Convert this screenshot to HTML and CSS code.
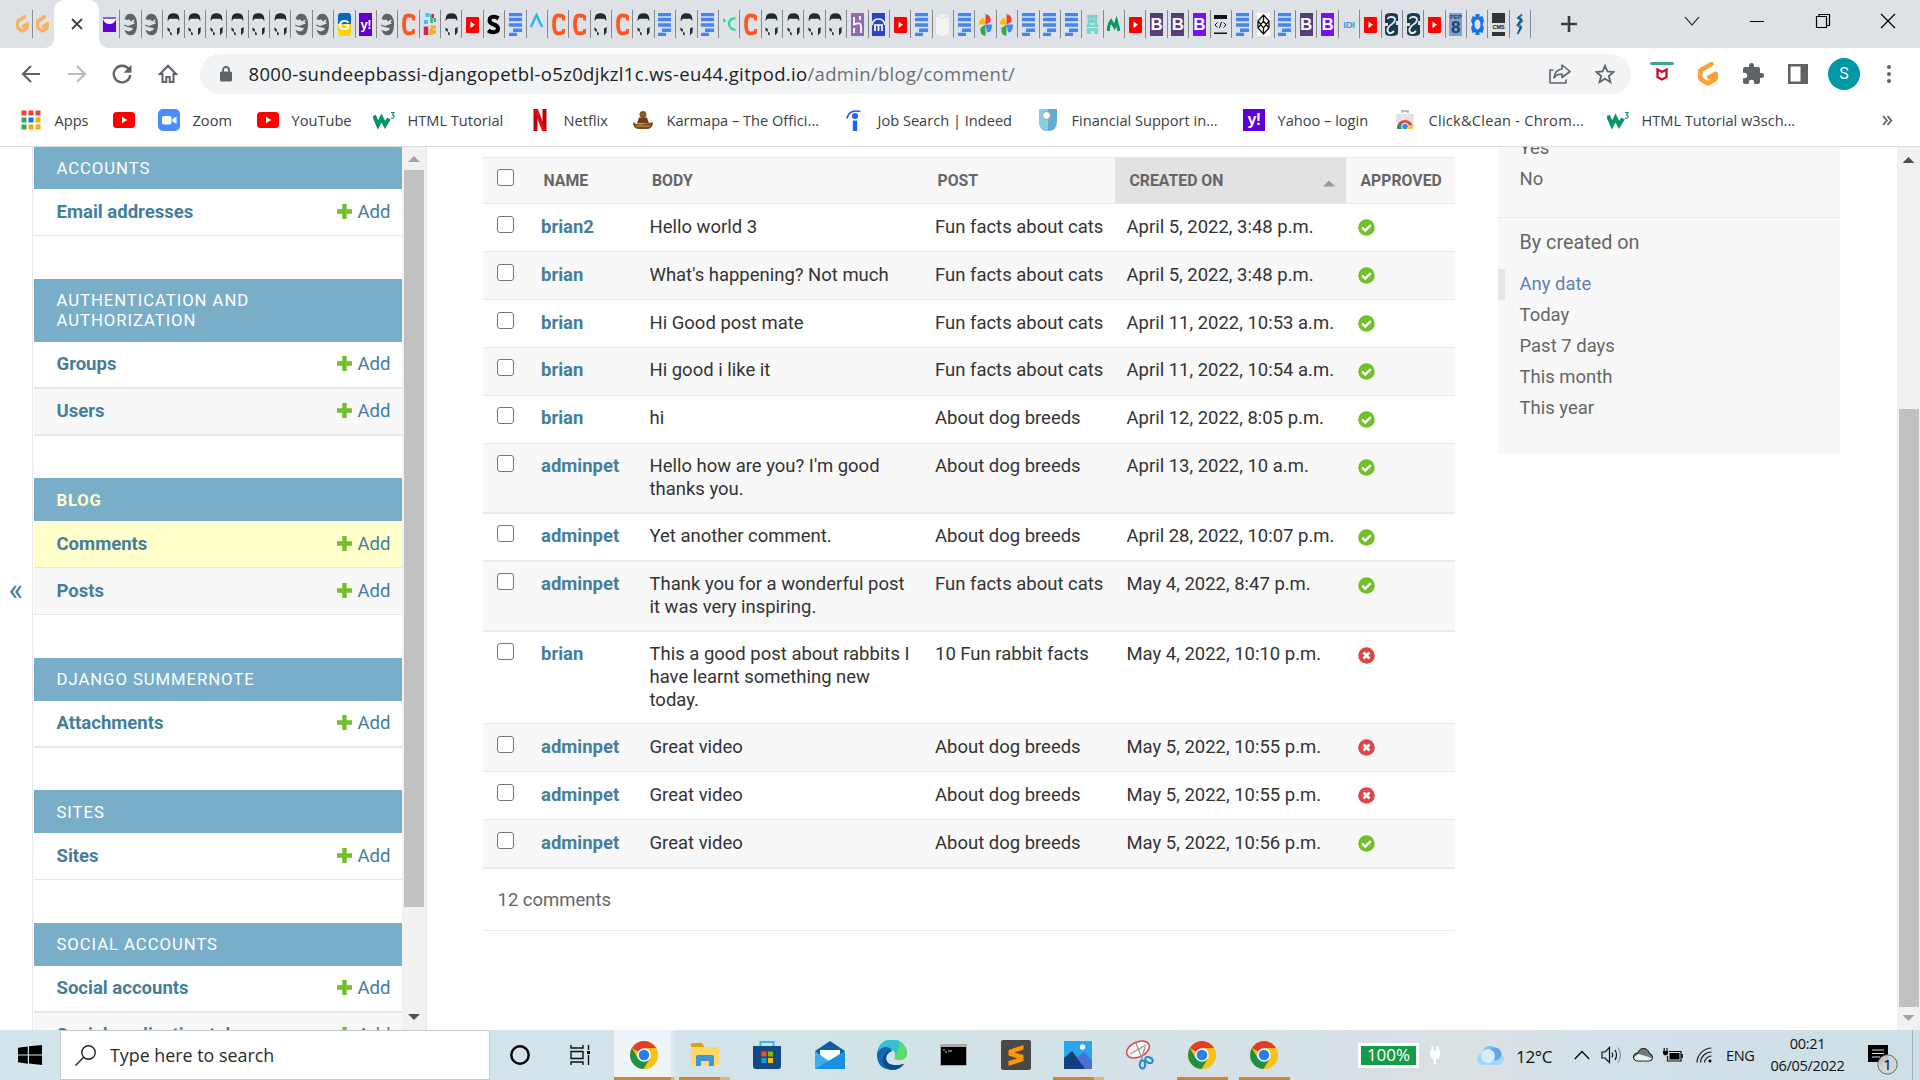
FILE: index.html
```html
<!DOCTYPE html>
<html lang="en">
<head>
<meta charset="utf-8">
<title>Select comment to change | Django site admin</title>
<link rel="stylesheet" href="styles.css">
</head>
<body>
<svg class="sprite" aria-hidden="true">
  <symbol id="gitpod" viewBox="0 0 24 24"><path d="M15 3.6 6.2 8.4a1.6 1.6 0 0 0-.8 1.4v5.6a1.6 1.6 0 0 0 .8 1.4l5 2.9a1.6 1.6 0 0 0 1.600 0l5-2.900a1.600 1.600 0 0 0 .8-1.400v-3.600l-5.600 3" fill="none" stroke="#ffa133" stroke-width="4" stroke-linecap="round" stroke-linejoin="round"/></symbol>
  <symbol id="f-mail" viewBox="0 0 13 23"><path d="M0 4h13v3H0z" fill="#8a5ce6"/><path d="M0 7h13v12H0z" fill="#6001d2"/><path d="M0 6h13q-1.500 5-6.500 5T0 6z" fill="#fff"/></symbol>
  <symbol id="f-globe" viewBox="0 0 13 23"><path d="M.5 6Q2 .7 6.500.7 13 .7 13 11.500T6.500 22.300Q2 22.300.5 17L5 18.500 8 17l1-2-3.500-.5L2 13.500Q0 13.500 0 11.500L4 13l4-1.500 3-1-1.500-1.500L11 6.500 9 7 7 8.500 5.500 6.500 3 7z" fill="#5f6368"/></symbol>
  <symbol id="f-gh" viewBox="0 0 13 23"><path d="M.8 5Q1 .3 6.500.3T12.200 5l.2 3-2-2.200H2.600L.6 8z" fill="#24292e"/><path d="M.3 14.500 2.800 16v3L.6 17.500zM12.700 14 10 15.500V22.500l2.500-3zM3 19l1.700.8v2.700L3 21.500z" fill="#24292e"/></symbol>
  <symbol id="f-c" viewBox="0 0 13 23"><path d="M12 7.500V4C10 2.500 9 2.500 6.500 2.500 3 2.500 2 5 2 11.500s1 9 4.500 9c2.500 0 3.500 0 5.500-1.500V16" fill="none" stroke="#ff5722" stroke-width="3.800"/></symbol>
  <symbol id="f-slack" viewBox="0 0 13 23"><path d="M4.500 0v4M1 9h4" stroke="#36c5f0" stroke-width="4"/><path d="M8.500 1v9M12 5v4" stroke="#2eb67d" stroke-width="2.500"/><path d="M3 13.500V22" stroke="#e01e5a" stroke-width="4.500"/><path d="M10 1v4" stroke="#e01e5a" stroke-width="2"/><path d="M7.500 14.500H13M8.500 16v6M12 17v4" stroke="#ecb22e" stroke-width="3.500"/></symbol>
  <symbol id="f-yt" viewBox="0 0 13 23"><rect y="4" width="13" height="16" rx="1" fill="#f00"/><path d="m4.500 8.500 4.500 3.300-4.500 3.200z" fill="#fff"/></symbol>
  <symbol id="f-s" viewBox="0 0 13 23"><path d="M11.500 5.500C8 3 2.500 3 2.500 7.500c0 5 8.500 3 8.500 8 0 4.500-6.500 4.500-10 2" fill="none" stroke="#000" stroke-width="4"/></symbol>
  <symbol id="f-doc" viewBox="0 0 13 23"><path d="M0 1.500h13M0 6.500h13M0 12h13M4 17.300h9M0 21.500h8" stroke="#4285f4" stroke-width="3.400"/></symbol>
  <symbol id="f-a" viewBox="0 0 13 23"><path d="M.8 14 6.500 2l5.700 12" fill="none" stroke="#1fb4f5" stroke-width="2.400"/></symbol>
  <symbol id="f-tc" viewBox="0 0 13 23"><path d="M.5 6 2 9M12.500 5.500C4 4 4 16.500 12.500 17" fill="none" stroke="#30d5a0" stroke-width="2.400"/></symbol>
  <symbol id="f-heroku" viewBox="0 0 13 23"><path d="M0 0h13v23H0z" fill="#8f6bb3"/><path d="M3 4v7.500C8 9.500 10 10 10 13v7M9 3v4M3 15v5" fill="none" stroke="#fff" stroke-width="1.800"/></symbol>
  <symbol id="f-m" viewBox="0 0 13 23"><path d="M0 0h13v23H0z" fill="#2b44c7"/><path d="M0 12Q1 6 6.500 6T13 12M3 18v-6h3.500v6M6.500 12H10v6" fill="none" stroke="#fff" stroke-width="1.700"/></symbol>
  <symbol id="f-w" viewBox="0 0 13 23"><path d="M0 3 6.500 1 13 3v18l-6.500 2L0 21z" fill="#f4f4f1"/><path d="m0 3 6.500 2L13 3" fill="none" stroke="#dcdcd6"/></symbol>
  <symbol id="f-pin" viewBox="0 0 13 23"><path d="M6.500 11.500V1q6 1 5 8z" fill="#ea4335"/><path d="M6.500 11.500H13q0 8-5 8z" fill="#4285f4"/><path d="M6.500 11.500V23q-6-1-5-8z" fill="#34a853"/><path d="M6.500 11.500H0Q0 5 5 5z" fill="#fbbc04"/></symbol>
  <symbol id="f-teal" viewBox="0 0 13 23"><path d="M1 2h11l-1 7 2 5H0l2-5zM1 15h11v6H8v-3H5v3H1z" fill="#79d4cd"/><path d="M4 6h1m3 0h1M4 11h5" stroke="#dee1e6" stroke-width="1.500"/></symbol>
  <symbol id="f-gw" viewBox="0 0 13 23"><path d="M1.500 18Q1 12 4 8l3.500 6L9.500 8 12 18" fill="none" stroke="#059862" stroke-width="3"/></symbol>
  <symbol id="f-code" viewBox="0 0 13 23"><path d="M0 2h13v4H0zM0 19.500h13v1.500H0z" fill="#111"/><path d="M3.500 9.500 1 12l2.500 2.500M7.500 9l-2 6M9.500 9.500 12 12l-2.500 2.500" stroke="#111" fill="none"/></symbol>
  <symbol id="f-cp" viewBox="0 0 13 23"><path d="M0 0h13v23H0z" fill="#fff"/><path d="M6.500 2 12 8v7l-5.500 6L1 15V8zM6.500 2v6M6.500 15v6M1 8l5.500 7L12 8M1 15l5.500-7 5.500 7" fill="none" stroke="#111" stroke-width="1.300"/></symbol>
  <symbol id="f-py" viewBox="0 0 13 23"><path d="M0 3q0-3 6.500-3T13 3v17q0 3-6.500 3T0 20z" fill="#1a3a50"/><path d="M0 10h3v3H0zM11 8h2v4h-2z" fill="#dee1e6"/><path d="M2.500 6q1-2.500 4.500-2T10 7t-3 4-4 4 .5 4.500T9 18" fill="none" stroke="#e9edf0" stroke-width="1.800"/></symbol>
  <symbol id="f-gear" viewBox="0 0 13 23"><path d="M4.500 1h4v3l3-1 1.500 5-1.500 3.500L13 15l-1.500 5-3-1v3h-4v-3l-3 1L0 15l1.500-3.500L0 8l1.500-5 3 1z" fill="#1a73e8"/><ellipse cx="6.500" cy="11.500" rx="3" ry="5" fill="#dee1e6"/></symbol>
  <symbol id="f-dna" viewBox="0 0 13 23"><path d="M9 1.500 5 5l4 3-4.500 4L8 15l-3.500 6" fill="none" stroke="#1b6fa8" stroke-width="2"/><path d="M5 4l4 2-4 4 3.500 3-3 5" fill="none" stroke="#123f66"/></symbol>

  <symbol id="yt" viewBox="0 0 22 22"><rect y="3" width="22" height="16" rx="3.500" fill="#f00"/><path d="m9 7.800 5.500 3.200L9 14.200z" fill="#fff"/></symbol>
  <symbol id="w3" viewBox="0 0 22 22"><path d="M1 6.500 5 16l3.500-7 3.500 7 4-6.500" fill="none" stroke="#059862" stroke-width="4"/><path d="M18 3.500h3L19.500 6q2 0 1.500 1.800T18 9" fill="none" stroke="#059862" stroke-width="1.200"/></symbol>
  <symbol id="plus" viewBox="0 0 15 15"><path d="M5.300 0h4.400v5.300H15v4.400H9.700V15H5.300V9.700H0V5.300h5.300z" fill="#70bf2b"/></symbol>
  <symbol id="yes" viewBox="0 0 17 17"><circle cx="8.500" cy="8.500" r="8.300" fill="#70bf2b"/><path d="m4.200 8.600 3 3 5.600-5.500" fill="none" stroke="#fff" stroke-width="2.400"/></symbol>
  <symbol id="no" viewBox="0 0 17 17"><circle cx="8.500" cy="8.500" r="8.300" fill="#dd4646"/><path d="m5.500 5.500 6 6m0-6-6 6" stroke="#fff" stroke-width="2.600"/></symbol>
  <symbol id="chrome" viewBox="0 0 28 28"><circle cx="14" cy="14" r="14" fill="#fbc116"/><path d="M14 14 1.900 7A14 14 0 0 1 26.100 7H14z" fill="#e33b2e"/><path d="M1.900 7a14 14 0 0 0 11.700 21l6.500-10.500L8 17.500z" fill="#1e9048"/><path d="M26.100 7A14 14 0 0 1 13.600 28l6.500-10.500L20 7z" fill="#fbc116"/><circle cx="14" cy="14" r="6.800" fill="#fff"/><circle cx="14" cy="14" r="5.300" fill="#2b7de9"/></symbol>
</svg>

<header class="browser">
  <div class="tabstrip">
    <div class="pre"><svg class="gp"><use href="#gitpod"/></svg><i class="sep"></i><svg class="gp"><use href="#gitpod"/></svg></div>
    <div class="active-tab"><svg width="12" height="12" viewBox="0 0 12 12"><path d="m1 1 10 10M11 1 1 11" stroke="#3c4043" stroke-width="1.800"/></svg></div>
    <div class="tabs">
      <i><svg><use href="#f-mail"/></svg></i><i><svg><use href="#f-globe"/></svg></i><i><svg><use href="#f-globe"/></svg></i><i><svg><use href="#f-gh"/></svg></i><i><svg><use href="#f-gh"/></svg></i><i><svg><use href="#f-gh"/></svg></i><i><svg><use href="#f-gh"/></svg></i><i><svg><use href="#f-gh"/></svg></i><i><svg><use href="#f-gh"/></svg></i><i><svg><use href="#f-globe"/></svg></i><i><svg><use href="#f-globe"/></svg></i><i><b class="fv ua">G</b></i><i><b class="fv ya">y!</b></i><i><svg><use href="#f-globe"/></svg></i><i><svg><use href="#f-c"/></svg></i><i><svg><use href="#f-slack"/></svg></i><i><svg><use href="#f-gh"/></svg></i><i><svg><use href="#f-yt"/></svg></i><i><svg><use href="#f-s"/></svg></i><i><svg><use href="#f-doc"/></svg></i><i><svg><use href="#f-a"/></svg></i><i><svg><use href="#f-c"/></svg></i><i><svg><use href="#f-c"/></svg></i><i><svg><use href="#f-gh"/></svg></i><i><svg><use href="#f-c"/></svg></i>
      <i><svg><use href="#f-gh"/></svg></i><i><svg><use href="#f-doc"/></svg></i><i><svg><use href="#f-gh"/></svg></i><i><svg><use href="#f-doc"/></svg></i><i><svg><use href="#f-tc"/></svg></i><i><svg><use href="#f-c"/></svg></i><i><svg><use href="#f-gh"/></svg></i><i><svg><use href="#f-gh"/></svg></i><i><svg><use href="#f-gh"/></svg></i><i><svg><use href="#f-gh"/></svg></i><i><svg><use href="#f-heroku"/></svg></i><i><svg><use href="#f-m"/></svg></i><i><svg><use href="#f-yt"/></svg></i><i><svg><use href="#f-doc"/></svg></i><i><svg><use href="#f-w"/></svg></i><i><svg><use href="#f-doc"/></svg></i><i><svg><use href="#f-pin"/></svg></i><i><svg><use href="#f-pin"/></svg></i><i><svg><use href="#f-doc"/></svg></i><i><svg><use href="#f-doc"/></svg></i><i><svg><use href="#f-doc"/></svg></i><i><svg><use href="#f-teal"/></svg></i><i><svg><use href="#f-gw"/></svg></i><i><svg><use href="#f-yt"/></svg></i><i><b class="fv bs">B</b></i><i><b class="fv bs">B</b></i><i><b class="fv bs vio">B</b></i><i><svg><use href="#f-code"/></svg></i><i><svg><use href="#f-doc"/></svg></i><i><svg><use href="#f-cp"/></svg></i>
      <i><svg><use href="#f-doc"/></svg></i><i><b class="fv bs">B</b></i><i><b class="fv bs vio">B</b></i><i><b class="fv idi">IDI</b></i><i><svg><use href="#f-yt"/></svg></i><i><svg><use href="#f-py"/></svg></i><i><svg><use href="#f-py"/></svg></i><i><svg><use href="#f-yt"/></svg></i><i><b class="fv pep"><small>PEP</small>8</b></i><i><svg><use href="#f-gear"/></svg></i><i><b class="fv cms">CMS</b></i><i><svg><use href="#f-dna"/></svg></i>
    </div>
    <svg class="newtab" width="18" height="18" viewBox="0 0 18 18"><path d="M9 1v16M1 9h16" stroke="#3c4043" stroke-width="2.600"/></svg>
    <div class="winctl">
      <svg viewBox="0 0 16 16"><path d="m1 4 7 8 7-8" fill="none" stroke="#111" stroke-width="1.100"/></svg>
      <svg viewBox="0 0 16 16"><path d="M1 8.500h14" stroke="#000"/></svg>
      <svg viewBox="0 0 16 16"><path d="M1.500 3.500h10v11h-10zM4 3.500v-2h10.500v11h-3" fill="none" stroke="#000" stroke-width="1.200"/></svg>
      <svg viewBox="0 0 16 16"><path d="m1 1 14 14M15 1 1 15" stroke="#000" stroke-width="1.200"/></svg>
    </div>
  </div>

  <div class="toolbar">
    <div class="nav">
      <svg viewBox="0 0 20 20"><path d="M19 10H2M10 2l-8 8 8 8" fill="none" stroke="#5f6368" stroke-width="2.200"/></svg>
      <svg viewBox="0 0 20 20"><path d="M1 10h17M10 2l8 8-8 8" fill="none" stroke="#babcbe" stroke-width="2.200"/></svg>
      <svg viewBox="0 0 20 20"><path d="M17 5.500A8.300 8.300 0 1 0 18.300 11" fill="none" stroke="#5f6368" stroke-width="2.300"/><path d="M19.500.8v8h-8z" fill="#5f6368"/></svg>
      <svg viewBox="0 0 20 20"><path d="M10 1.800 2 10h2.500v8h3.800v-5h3.400v5h3.800v-8H18z" fill="none" stroke="#5f6368" stroke-width="2"/></svg>
    </div>
    <div class="omnibox">
      <svg width="12" height="16" viewBox="0 0 12 16"><rect y="5.500" width="12" height="10" rx="1.500" fill="#5f6368"/><path d="M3 6V4a3 3 0 0 1 6 0v2" fill="none" stroke="#5f6368" stroke-width="1.800"/></svg>
      <span class="url">8000-sundeepbassi-djangopetbl-o5z0djkzl1c.ws-eu44.gitpod.io<span class="path">/admin/blog/comment/</span></span>
      <svg class="share" width="22" height="20" viewBox="0 0 22 20"><path d="M4.500 6H1v13h16v-3.500M13 1l8 6.500-8 6V10c-4 0-6.500 1.500-8 4 .5-5 3-8.500 8-9z" fill="none" stroke="#5f6368" stroke-width="1.600" stroke-linejoin="round"/></svg>
      <svg width="20" height="20" viewBox="0 0 20 20"><path d="m10 1.800 2.400 5.700 6.200.5-4.700 4 1.500 6.100-5.400-3.300-5.400 3.300 1.500-6.100-4.700-4 6.200-.5z" fill="none" stroke="#5f6368" stroke-width="1.800"/></svg>
    </div>
    <div class="ext">
      <svg width="24" height="24" viewBox="0 0 24 24"><path d="M1.500 1.500h21" stroke="#3fa58c" stroke-width="3" stroke-linecap="round"/><path d="M7.500 7.500V15l4.500 2.500 4.500-2.500V7.500L12 10z" fill="none" stroke="#c8102e" stroke-width="2.300"/></svg>
      <svg width="28" height="28"><use href="#gitpod"/></svg>
      <svg width="24" height="24" viewBox="0 0 24 24"><path d="M20.500 11H19V7a2 2 0 0 0-2-2h-4V3.500a2.500 2.500 0 0 0-5 0V5H4a2 2 0 0 0-2 2v3.800h1.500a2.700 2.700 0 0 1 0 5.400H2V20a2 2 0 0 0 2 2h3.800v-1.500a2.700 2.700 0 0 1 5.400 0V22H17a2 2 0 0 0 2-2v-4h1.500a2.500 2.500 0 0 0 0-5z" fill="#5f6368"/></svg>
      <svg width="20" height="20" viewBox="0 0 20 20"><path d="M1.300 1.300h17.400v17.400H1.300z" fill="none" stroke="#5f6368" stroke-width="2.600"/><path d="M12.500 0H20v20h-7.500z" fill="#5f6368"/></svg>
      <span class="avatar">S</span>
      <svg width="6" height="20" viewBox="0 0 6 20"><circle cx="3" cy="3" r="2" fill="#5f6368"/><circle cx="3" cy="10" r="2" fill="#5f6368"/><circle cx="3" cy="17" r="2" fill="#5f6368"/></svg>
    </div>
  </div>

  <nav class="bookmarks">
    <a><svg viewBox="0 0 22 22"><path d="M1.500 1.500h5v5h-5zM8.500 1.500h5v5h-5zM15.500 1.500h5v5h-5z" fill="#ea4335"/><path d="M1.500 8.500h5v5h-5zM1.500 15.500h5v5h-5z" fill="#34a853"/><path d="M8.500 8.500h5v5h-5z" fill="#1a73e8"/><path d="M8.500 15.500h5v5h-5zM15.500 15.500h5v5h-5zM15.500 8.500h5v5h-5z" fill="#f9ab00"/></svg><span>Apps</span></a>
    <a><svg><use href="#yt"/></svg></a>
    <a><svg viewBox="0 0 22 22"><rect width="22" height="22" rx="5" fill="#4a8cff"/><rect x="4" y="7" width="9.500" height="8.500" rx="2" fill="#fff"/><path d="m14.500 10 4-2.500v7.500l-4-2.500z" fill="#fff"/></svg><span>Zoom</span></a>
    <a><svg><use href="#yt"/></svg><span>YouTube</span></a>
    <a><svg><use href="#w3"/></svg><span>HTML Tutorial</span></a>
    <a><svg viewBox="0 0 22 22"><path d="M4.500 0h4v22h-4zM13.500 0h4v22h-4z" fill="#b20710"/><path d="M4.500 0h4.300l8.700 22h-4.300z" fill="#e50914"/></svg><span>Netflix</span></a>
    <a><svg viewBox="0 0 22 22"><circle cx="11" cy="5.500" r="3.500" fill="#8a5a22"/><path d="M7 8.500h8l2 6H5z" fill="#6e4114"/><path d="M1 13q3 3 10 2t10-2q0 6-5 7H6q-5-1-5-7z" fill="#7c4d1c"/><path d="M4 17h14" stroke="#c39a5a"/></svg><span>Karmapa – The Offici...</span></a>
    <a><svg viewBox="0 0 22 22"><path d="M4 9.500Q6 0 17.500 2.500" fill="none" stroke="#2557f5" stroke-width="1.600"/><circle cx="12" cy="7" r="3" fill="#2164f3"/><path d="M9.800 11.500h4.400V22H9.800z" fill="#2164f3"/></svg><span>Job Search | Indeed</span></a>
    <a><svg viewBox="0 0 22 22"><path d="M2 0h18v12q0 10-9 10T2 12z" fill="#62abd1"/><path d="M2 0h9v22Q2 20 2 12z" fill="#8ccbe5"/><circle cx="9.500" cy="6.500" r="4" fill="#fff" stroke="#9a9a9a"/></svg><span>Financial Support in...</span></a>
    <a><b class="yahoo">y!</b><span>Yahoo – login</span></a>
    <a><svg viewBox="0 0 22 22"><path d="M8 4V2h6v2" fill="none" stroke="#aaa" stroke-width="1.500"/><path d="M2 5h18l-1 15H3z" fill="#e4e4e4"/><path d="M3 19a8 8 0 0 1 16 0z" fill="#dd4b3e"/><path d="M3 20q0-4 3-6l4 6z" fill="#1e9e57"/><path d="M12 20l3-4h4v4z" fill="#fbc116"/><circle cx="11" cy="17.500" r="3.400" fill="#4285f4" stroke="#fff"/></svg><span class="wide">Click&amp;Clean - Chrom...</span></a>
    <a><svg><use href="#w3"/></svg><span>HTML Tutorial w3sch...</span></a>
    <a class="more"><svg viewBox="0 0 10 10"><path d="m1 1 3.500 4L1 9M5 1l3.500 4L5 9" fill="none" stroke="#5f6368" stroke-width="1.600"/></svg></a>
  </nav>
</header>

<main class="page">
  <div class="toggle">«</div>
  <aside class="sidebar">
    <div class="apps">
      <h3 class="h42">Accounts</h3>
      <div class="row"><b>Email addresses</b><a><svg><use href="#plus"/></svg>Add</a></div>
      <h3 class="two g43">Authentication and<br>Authorization</h3>
      <div class="row thick"><b>Groups</b><a><svg><use href="#plus"/></svg>Add</a></div>
      <div class="row alt thick"><b>Users</b><a><svg><use href="#plus"/></svg>Add</a></div>
      <h3 class="g42 current">Blog</h3>
      <div class="row sel"><b>Comments</b><a><svg><use href="#plus"/></svg>Add</a></div>
      <div class="row alt"><b>Posts</b><a><svg><use href="#plus"/></svg>Add</a></div>
      <h3 class="g43">Django Summernote</h3>
      <div class="row thick"><b>Attachments</b><a><svg><use href="#plus"/></svg>Add</a></div>
      <h3 class="g42 low">Sites</h3>
      <div class="row"><b>Sites</b><a><svg><use href="#plus"/></svg>Add</a></div>
      <h3 class="g43">Social Accounts</h3>
      <div class="row thick"><b>Social accounts</b><a><svg><use href="#plus"/></svg>Add</a></div>
      <div class="row alt thick"><b>Social application tokens</b><a><svg><use href="#plus"/></svg>Add</a></div>
    </div>
    <div class="scroll side-scroll"><i class="up dim"></i><i class="thumb"></i><i class="down"></i></div>
  </aside>

  <section class="content">
    <table>
      <colgroup><col class="c1"><col class="c2"><col class="c3"><col class="c4"><col class="c5"><col class="c6"></colgroup>
      <thead><tr><th><i class="cb"></i></th><th>Name</th><th>Body</th><th>Post</th><th class="sorted"><span>Created on<i class="asc"></i></span></th><th>Approved</th></tr></thead>
      <tbody>
        <tr class="r1"><td><i class="cb"></i></td><td>brian2</td><td>Hello world 3</td><td>Fun facts about cats</td><td>April 5, 2022, 3:48 p.m.</td><td><svg><use href="#yes"/></svg></td></tr>
        <tr class="r1"><td><i class="cb"></i></td><td>brian</td><td>What's happening? Not much</td><td>Fun facts about cats</td><td>April 5, 2022, 3:48 p.m.</td><td><svg><use href="#yes"/></svg></td></tr>
        <tr class="r1"><td><i class="cb"></i></td><td>brian</td><td>Hi Good post mate</td><td>Fun facts about cats</td><td>April 11, 2022, 10:53 a.m.</td><td><svg><use href="#yes"/></svg></td></tr>
        <tr class="r1 up1"><td><i class="cb"></i></td><td>brian</td><td>Hi good i like it</td><td>Fun facts about cats</td><td>April 11, 2022, 10:54 a.m.</td><td><svg><use href="#yes"/></svg></td></tr>
        <tr class="r1 up1"><td><i class="cb"></i></td><td>brian</td><td>hi</td><td>About dog breeds</td><td>April 12, 2022, 8:05 p.m.</td><td><svg><use href="#yes"/></svg></td></tr>
        <tr class="r2 up1 thick"><td><i class="cb"></i></td><td>adminpet</td><td>Hello how are you? I'm good<br>thanks you.</td><td>About dog breeds</td><td>April 13, 2022, 10 a.m.</td><td><svg><use href="#yes"/></svg></td></tr>
        <tr class="r1 up1 thick"><td><i class="cb"></i></td><td>adminpet</td><td>Yet another comment.</td><td>About dog breeds</td><td>April 28, 2022, 10:07 p.m.</td><td><svg><use href="#yes"/></svg></td></tr>
        <tr class="r2 up1 thick"><td><i class="cb"></i></td><td>adminpet</td><td>Thank you for a wonderful post<br>it was very inspiring.</td><td>Fun facts about cats</td><td>May 4, 2022, 8:47 p.m.</td><td><svg><use href="#yes"/></svg></td></tr>
        <tr class="r3 up1"><td><i class="cb"></i></td><td>brian</td><td>This a good post about rabbits I<br>have learnt something new<br>today.</td><td>10 Fun rabbit facts</td><td>May 4, 2022, 10:10 p.m.</td><td><svg><use href="#no"/></svg></td></tr>
        <tr class="r1"><td><i class="cb"></i></td><td>adminpet</td><td>Great video</td><td>About dog breeds</td><td>May 5, 2022, 10:55 p.m.</td><td><svg><use href="#no"/></svg></td></tr>
        <tr class="r1"><td><i class="cb"></i></td><td>adminpet</td><td>Great video</td><td>About dog breeds</td><td>May 5, 2022, 10:55 p.m.</td><td><svg><use href="#no"/></svg></td></tr>
        <tr class="last thick"><td><i class="cb"></i></td><td>adminpet</td><td>Great video</td><td>About dog breeds</td><td>May 5, 2022, 10:56 p.m.</td><td><svg><use href="#yes"/></svg></td></tr>
      </tbody>
    </table>
    <p class="paginator">12 comments</p>
  </section>

  <aside class="filter">
    <ul class="first"><li>Yes</li><li>No</li></ul>
    <h4>By created on</h4>
    <ul><li class="chosen">Any date</li><li>Today</li><li>Past 7 days</li><li>This month</li><li>This year</li></ul>
  </aside>
  <div class="scroll page-scroll"><i class="up"></i><i class="thumb"></i><i class="down dim"></i></div>
</main>

<footer class="taskbar">
  <div class="start"><svg width="24" height="20" viewBox="0 0 24 20"><path d="M0 2.800 9.800 1.400V9.500H0zM11 1.200 24 0v9.500H11zM0 10.600h9.800v8.100L0 17.300zM11 10.600h13V20l-13-1.500z" fill="#000"/></svg></div>
  <div class="search"><svg width="21" height="21" viewBox="0 0 21 21"><circle cx="13.500" cy="7.500" r="6.700" fill="none" stroke="#222" stroke-width="1.400"/><path d="M8.700 12.300.5 20.500" stroke="#222" stroke-width="1.400"/></svg><span>Type here to search</span></div>
  <div class="icons">
    <span><svg width="22" height="22" viewBox="0 0 22 22"><circle cx="11" cy="11" r="8.700" fill="none" stroke="#000" stroke-width="2.400"/></svg></span>
    <span><svg width="22" height="20" viewBox="0 0 22 20"><path d="M2 0v3h12V0M2 20v-3h12v3M2 6.500h12v7H2zM19.500 0v5M19.500 10v10" fill="none" stroke="#111" stroke-width="1.400"/><path d="M18 6h3v3h-3z"/></svg></span>
    <span class="act on"><svg width="28" height="28"><use href="#chrome"/></svg></span>
    <span class="on"><svg width="28" height="26" viewBox="0 0 28 26"><path d="M0 1h11l2 3v4H0z" fill="#e0a010"/><path d="M0 5h28v18H0z" fill="#ffd766"/><path d="M5 24v-9q0-2 2-2h14q2 0 2 2v9h-5v-5h-8v5z" fill="#3a96dd"/></svg></span>
    <span><svg width="30" height="30" viewBox="0 0 30 30"><path d="M8.500 7V2h13v5" fill="none" stroke="#35b8e8" stroke-width="2"/><path d="M1 6h28v20q0 3-3 3H4q-3 0-3-3z" fill="#154a80"/><path d="M9.500 11.500h5v5h-5z" fill="#f25022"/><path d="M16 11.500h5v5h-5z" fill="#7fba00"/><path d="M9.500 18h5v5h-5z" fill="#00a4ef"/><path d="M16 18h5v5h-5z" fill="#ffb900"/></svg></span>
    <span><svg width="30" height="28" viewBox="0 0 30 28"><path d="m0 10 15-10 15 10v6H0z" fill="#0f5ea8"/><path d="M5 9h20v10H5z" fill="#fff"/><path d="M0 10 15 21 30 10v18H0z" fill="#39b0ee"/><path d="M0 28 30 10v18z" fill="#1d8fe0"/></svg></span>
    <span><svg width="30" height="30" viewBox="0 0 30 30"><path d="M0 15A15 15 0 0 1 30 13q0 7-8 7-6 0-4-4 1-5-4-6Q5 9 0 15z" fill="#35c1d4"/><path d="M22 2q8 4 8 11 0 7-8 7-4 0-4-3 4-6 4-15z" fill="#5cdb6b"/><path d="M0 15q1-7 8-8 6 0 7 4-6 2-6 8 2 9 18 5-4 6-12 6Q0 29 0 15z" fill="#1267b4"/><path d="M15 11q-6 2-6 8 2 9 18 5-8 9-17 4Q2 22 8 14q3-4 7-3z" fill="#0c4a92"/></svg></span>
    <span><svg width="27" height="22" viewBox="0 0 27 22"><path d="M0 0h27v22H0z" fill="#aaa"/><path d="M1 3h25v18H1z" fill="#000"/><path d="M3 6h2m0 2h2m1-1h4" stroke="#ccc"/></svg></span>
    <span><svg width="30" height="30" viewBox="0 0 30 30"><rect width="30" height="30" rx="2" fill="#484848"/><path d="m22.500 5-15 5v5.500l9 3-9 2.500V26l15-5v-6l-9-2.500 9-3z" fill="#ff9800"/></svg></span>
    <span class="on"><svg width="28" height="28" viewBox="0 0 28 28"><path d="M0 0h28v28H0z" fill="#29a7ea"/><path d="m0 17 8-7 14 18H0z" fill="#123f82"/><path d="m13 17 7-6 8 9v8h-7z" fill="#4b6fd2"/><circle cx="18.500" cy="6" r="2.700" fill="#fff"/></svg></span>
    <span><svg width="30" height="30" viewBox="0 0 30 30"><ellipse cx="13" cy="9.500" rx="12" ry="7.500" transform="rotate(-25 13 9.500)" fill="#f7f7f7" stroke="#e2474f" stroke-width="1.500"/><path d="M5 14 21 5M11 3l7 18M20 7l-4 14" stroke="#999" stroke-width="1.300"/><ellipse cx="17.500" cy="24.500" rx="2.700" ry="4" fill="none" stroke="#1e88c9" stroke-width="2"/><ellipse cx="24" cy="20" rx="4" ry="2.700" transform="rotate(30 24 20)" fill="none" stroke="#1e88c9" stroke-width="2"/></svg></span>
    <span class="on full"><svg width="28" height="28"><use href="#chrome"/></svg></span>
    <span class="on full"><svg width="28" height="28"><use href="#chrome"/></svg></span>
  </div>
  <div class="tray">
    <span class="batt">100%</span>
    <svg class="plug" width="10" height="18" viewBox="0 0 10 18"><path d="M2.500 0v5M7.500 0v5M5 12v6" stroke="#fff" stroke-width="2"/><path d="M0 4.500h10v4q0 4-5 5-5-1-5-5z" fill="#fff"/></svg>
    <svg class="wx" width="27" height="19" viewBox="0 0 27 19"><circle cx="13" cy="8" r="8" fill="#7dbdf0"/><rect y="7" width="27" height="12" rx="6" fill="#a5d5fa"/><circle cx="18" cy="8" r="6.500" fill="#5ea8e6"/><circle cx="11" cy="10" r="7" fill="#d4edff"/></svg>
    <span class="temp">12°C</span>
    <svg class="caret" width="16" height="10" viewBox="0 0 16 10"><path d="m.8 9 7.200-7.500L15.200 9" fill="none" stroke="#111" stroke-width="1.500"/></svg>
    <svg class="spk" width="21" height="18" viewBox="0 0 21 18"><path d="M1 6h3l4.500-4.500v15L4 12H1z" fill="none" stroke="#111" stroke-width="1.200"/><path d="M11 6.500q1.500 2.500 0 5M14 4q3 5 0 10" fill="none" stroke="#111" stroke-width="1.200"/><path d="M17 1.500q5 7.500 0 15" fill="none" stroke="#8b969c" stroke-width="1.200"/></svg>
    <svg class="cl" width="20" height="14" viewBox="0 0 20 14"><path d="M5 13q-4.500 0-4.500-4T5 5q1-4.500 5.500-4.500T16 5q3.500 1 3.500 4.500T16 13z" fill="#777" stroke="#111"/><path d="M5 12.500q-4 0-3.500-3.500l4-3L19 10q-1 3-4 2.500z" fill="#eee"/></svg>
    <svg class="bt" width="20" height="14" viewBox="0 0 20 14"><path d="M6.500 5h10v6.500h-10z"/><path d="M6 3.500h12v9.500H4.500V8M19.300 6v4M1.200 0v3M4 0v3" stroke="#111" stroke-width="1.200" fill="none"/><path d="M0 3h5.200v2q0 2-2.600 2.500Q0 7 0 5z"/></svg>
    <svg class="wf" width="16" height="16" viewBox="0 0 16 16"><path d="M1 15.500A15 15 0 0 1 15.500 1M4.500 15.500A11 11 0 0 1 15.500 5M8.500 15.500A7 7 0 0 1 15.500 9" fill="none" stroke="#222" stroke-width="1.200"/><circle cx="14" cy="14" r="1.500"/></svg>
    <span class="eng">ENG</span>
    <span class="clock"><span>00:21</span><span>06/05/2022</span></span>
    <span class="notif"><svg width="30" height="31" viewBox="0 0 30 31"><path d="M0 0h20v17h-4l-4 4v-4H0z"/><path d="M4 5h12M4 8.500h12M4 12h8" stroke="#d5e3ea" stroke-width="1.200"/><circle cx="19.500" cy="19.500" r="9.700" fill="#cfd4d7" fill-opacity=".92" stroke="#666"/><text x="19.500" y="25" text-anchor="middle" class="badge">1</text></svg></span>
  </div>
</footer>
</body>
</html>
```
FILE: styles.css
```css
* { box-sizing: border-box; }
html, body { margin: 0; width: 1920px; height: 1080px; overflow: hidden; background: #fff; }
body { font-family: Roboto, "Liberation Sans", sans-serif; display: flex; flex-direction: column; }
.sprite { width: 0; height: 0; position: absolute; }
svg { display: block; flex: none; }
ul, p, h3, h4 { margin: 0; padding: 0; list-style: none; font-weight: 400; }

/* Browser chrome */
.browser { height: 147px; flex: none; border-bottom: 1px solid #dadce0; font-family: "Open Sans", "Noto Sans", sans-serif; }
.tabstrip { height: 48px; background: #dee1e6; display: flex; align-items: center; }
.pre { width: 54px; padding-left: 12px; display: flex; align-items: center; }
.gp { width: 21px; height: 30px; opacity: .75; }
.pre .gp { transform: scaleX(.85); }
.pre .sep { width: 1px; height: 28px; background: #8a8d91; margin: 0 -1px; }
.active-tab { width: 45px; height: 48px; background: #fff; border-radius: 10px 10px 0 0; display: flex; align-items: center; justify-content: center; position: relative; }
.active-tab::before, .active-tab::after { content: ""; position: absolute; bottom: 0; width: 9px; height: 9px; left: -9px; background: radial-gradient(circle at 0 0, #dee1e6 8.500px, #fff 9px); }
.active-tab::after { left: auto; right: -9px; background: radial-gradient(circle at 100% 0, #dee1e6 8.500px, #fff 9px); }
.active-tab svg { margin-left: 1px; }
.tabs { display: flex; }
.tabs i { width: 21.390px; height: 28px; border-right: 1px solid #85888c; display: flex; align-items: center; justify-content: center; }
.tabs svg { width: 13px; height: 23px; }
.fv { width: 13px; height: 23px; flex: none; font: 700 17px/23px "Liberation Sans", sans-serif; color: #fff; display: flex; flex-direction: column; align-items: center; justify-content: center; }
.ua { background: linear-gradient(#0b66c3 50%, #fdd400 50%); border-radius: 3px; font-size: 15px; }
.ya { background: #6001d2; font-size: 13px; letter-spacing: -.5px; }
.bs { background: #563d7c; }
.vio { background: #7411f5; }
.idi { color: #2aa0e0; font-size: 9.500px; letter-spacing: -.3px; }
.pep { background: #7da0cc; color: #1d4273; font-size: 17px; line-height: 14px; }
.pep small { font-size: 6px; line-height: 8px; }
.cms { background: linear-gradient(#333 42%, transparent 42% 82%, #333 82%); color: #111; font-size: 5.500px; padding-top: 6px; line-height: 8px; }
.newtab { margin-left: 29px; }
.winctl { display: flex; gap: 49.500px; margin-left: 105.500px; margin-top: -6px; }
.winctl svg { width: 16px; height: 16px; }

.toolbar { height: 52px; display: flex; align-items: center; }
.nav { display: flex; gap: 25.700px; padding-left: 21px; width: 200px; }
.nav svg { width: 20px; height: 20px; }
.omnibox { width: 1431px; height: 40px; border-radius: 20px; background: #f1f3f4; display: flex; align-items: center; padding: 0 16px 0 20px; }
.url { margin-left: 16.500px; font-size: 18.500px; letter-spacing: .34px; color: #202124; flex: 1; white-space: nowrap; padding-bottom: 1px; }
.path { color: #6b6f74; letter-spacing: .3px; }
.share { margin-right: 24px; }
.ext { display: flex; align-items: center; }
.ext > :nth-child(1) { margin-left: 19px; }
.ext > :nth-child(2) { margin-left: 20px; }
.ext > :nth-child(3) { margin-left: 19px; }
.ext > :nth-child(4) { margin-left: 23px; }
.avatar { width: 32px; height: 32px; border-radius: 50%; background: #0097a7; color: #fff; font: 16px/32px Roboto, sans-serif; text-align: center; margin: 0 26px 0 20px; }

.bookmarks { height: 42px; display: grid; grid-template-columns: 93px 45px 99px 116px 156px 103px 211px 194px 206px 151px 213px 262px 31px; padding: 0 0 2px 20px; align-items: center; font-size: 14.600px; color: #3c4043; white-space: nowrap; }
.bookmarks a { display: flex; align-items: center; gap: 12.500px; }
.bookmarks a > svg { width: 22px; height: 22px; }
.bookmarks .wide { letter-spacing: .25px; }
.yahoo { width: 22px; height: 22px; background: #6001d2; color: #fff; font: 700 16px/21px "Liberation Sans", sans-serif; text-align: center; letter-spacing: -.5px; }
.bookmarks .more svg { width: 11px; height: 11px; margin-left: 13px; }

/* Admin page */
.page { height: 883px; flex: none; display: flex; overflow: hidden; background: #fff; }
.toggle { width: 32px; flex: none; padding: 429px 0 0 8.500px; font-size: 31px; line-height: 28px; color: #447e9b; }
.sidebar { width: 395px; flex: none; border-left: 1px solid #eaeaea; border-right: 1px solid #eaeaea; display: flex; padding-left: 1px; }
.apps { width: 368px; overflow: hidden; height: 883px; }
.apps h3 { height: 43px; background: #79aec8; color: #fff; text-transform: uppercase; font-size: 16.700px; line-height: 20px; letter-spacing: .95px; padding: 12px 22.500px 0; }
.apps h3.h42 { height: 42px; }
.apps h3.two { height: 63px; }
.apps h3.low { padding-top: 13px; }
.apps .g42 { margin-top: 42px; }
.apps .g43 { margin-top: 43px; }
.apps h3.current { color: #ffc; font-weight: 700; padding-top: 13px; letter-spacing: .8px; }
.row { height: 47px; border-bottom: 1px solid #e6e6e6; padding: 0 11.500px 1px 22.500px; display: flex; justify-content: space-between; align-items: center; font-size: 18.550px; color: #447e9b; }
.row.thick { border-bottom-width: 2px; padding-bottom: 2px; }
.row a { display: flex; align-items: center; gap: 6px; }
.row b { font-weight: 700; }
.row svg { width: 15px; height: 15px; }
.alt { background: #f8f8f8; }
.sel { background: #ffc; }
.scroll { background: #f1f1f1; width: 24px; display: flex; flex-direction: column; align-items: center; flex: none; }
.scroll .thumb { width: 20px; background: #c1c1c1; }
.up, .down { width: 12px; height: 6px; background: #505050; clip-path: polygon(50% 0, 100% 100%, 0 100%); }
.down { clip-path: polygon(0 0, 100% 0, 50% 100%); margin-top: auto; margin-bottom: 10px; }
.dim { background: #a3a3a3; }
.side-scroll .up { margin-top: 9px; }
.side-scroll .thumb { margin-top: 8px; height: 737px; }
.page-scroll { width: 23px; margin-left: 57px; }
.page-scroll .up { margin-top: 10px; }
.page-scroll .thumb { margin-top: 246px; height: 598px; }
.page-scroll .down { margin-bottom: 9px; }

.content { width: 972px; margin: 10px 43px 0 56px; flex: none; }
table { width: 972px; table-layout: fixed; border-collapse: separate; border-spacing: 0; font-size: 18.480px; line-height: 23px; color: #333; }
.c1 { width: 46px; } .c2 { width: 108.500px; } .c3 { width: 285.500px; } .c4 { width: 192px; } .c5 { width: 231px; } .c6 { width: 109px; }
th { height: 47px; padding: 0 0 1px 14.500px; text-align: left; vertical-align: middle; font-size: 15.800px; font-weight: 700; text-transform: uppercase; color: #666; background: #f8f8f8; border-top: 1px solid #eaeaea; border-bottom: 1px solid #eaeaea; white-space: nowrap; }
th .cb { margin-top: -5px; }
th.sorted { background: #e2e2e2; }
.sorted span { display: flex; align-items: center; justify-content: space-between; padding-right: 11px; }
.asc { width: 12px; height: 6px; background: #999; clip-path: polygon(50% 0, 100% 100%, 0 100%); margin-top: 7px; }
td { padding: 12px 0 0 12px; vertical-align: top; border-bottom: 1px solid #eaeaea; white-space: nowrap; }
.up1 td { padding-top: 11px; }
.up1 td svg { margin-top: 4px; }
tbody .thick td { border-bottom-width: 2px; }
th:first-child, td:first-child { padding-left: 14px; }
td:nth-child(2) { font-weight: 700; color: #447e9b; }
td:nth-child(5) { padding-left: 11.500px; }
td svg { width: 17px; height: 17px; margin-top: 3px; }
tbody tr:nth-child(even) { background: #f8f8f8; }
.r1 { height: 48px; } .r2 { height: 70px; } .r3 { height: 92px; } .last { height: 49px; }
.cb { display: block; width: 17px; height: 17px; border: 1px solid #767676; border-radius: 3px; background: #fff; }
.paginator { height: 62px; border-bottom: 1px solid #eaeaea; padding-left: 14.500px; line-height: 63px; font-size: 18.480px; color: #666; }

.filter { width: 342px; height: 307px; background: #f8f8f8; flex: none; font-size: 18.480px; color: #666; overflow: hidden; }
.filter li { height: 31.100px; line-height: 31px; padding-left: 21.500px; }
.filter .first { height: 71px; border-bottom: 1px solid #eaeaea; overflow: hidden; }
.filter .first li:first-child { margin-top: -14px; }
.filter h4 { font-size: 19.800px; line-height: 22px; padding: 14px 0 15px 21.500px; }
.filter .chosen { border-left: 7px solid #e6e6e6; padding-left: 14.500px; color: #5b80b2; }

/* Taskbar */
.taskbar { height: 50px; flex: none; background: linear-gradient(90deg, #d3e3ec 0, #d2e3e8 50%, #d5e0e6 68%, #dbe1e2 76%, #d1e0e9 84%, #cfdfe6); display: flex; font-family: "Open Sans", "Noto Sans", sans-serif; color: #111; }
.start { width: 60px; display: flex; align-items: center; padding-left: 18px; }
.search { width: 430px; background: #fff; border: 1px solid #c6c9cb; display: flex; align-items: center; padding-left: 14px; gap: 14px; font-size: 17.850px; color: #2b2b2b; }
.search span { padding-bottom: 1px; }
.icons { display: grid; grid-template-columns: 60px 59px 64px 63px 62px 63px 62px 61px 63px 62px 62px 62px 61px; width: 804px; }
.icons span { display: flex; align-items: center; justify-content: center; position: relative; }
.icons .act { background: linear-gradient(90deg, #eef4f7 57px, #dfeaee 57px); margin: 0 -2px 0 5px; padding-right: 2px; }
.on::after { content: ""; position: absolute; bottom: 0; left: 6px; width: 51px; height: 3px; background: linear-gradient(90deg, #c9892e 41px, #dfb679 41px); }
.act.on::after { left: 0; width: 61px; background: linear-gradient(90deg, #c9892e 57px, #dfb679 57px); }
.full.on::after { background: #c9892e; }
.tray { flex: 1; display: flex; align-items: center; white-space: nowrap; }
.batt { width: 61px; height: 25px; margin-left: 64px; background: #169b48; border: 3px solid #fff; color: #fff; font-size: 17px; line-height: 18px; text-align: center; }
.plug { margin-left: 11px; }
.wx { margin-left: 37px; }
.temp { margin-left: 12px; width: 58px; font-size: 17px; padding-top: 2px; letter-spacing: -.3px; }
.spk { margin-left: 11px; } .cl { margin-left: 11px; } .bt { margin-left: 10px; } .wf { margin-left: 13px; }
.eng { margin-left: 14px; width: 36px; font-size: 14.500px; letter-spacing: -.4px; }
.clock { width: 91px; display: flex; flex-direction: column; align-items: center; font-size: 14.500px; line-height: 22.500px; letter-spacing: -.3px; }
.notif { margin-left: 15px; height: 50px; width: 45px; border-right: 1px solid #9fb0b8; padding-top: 15px; }
.badge { font-size: 15px; }
```
